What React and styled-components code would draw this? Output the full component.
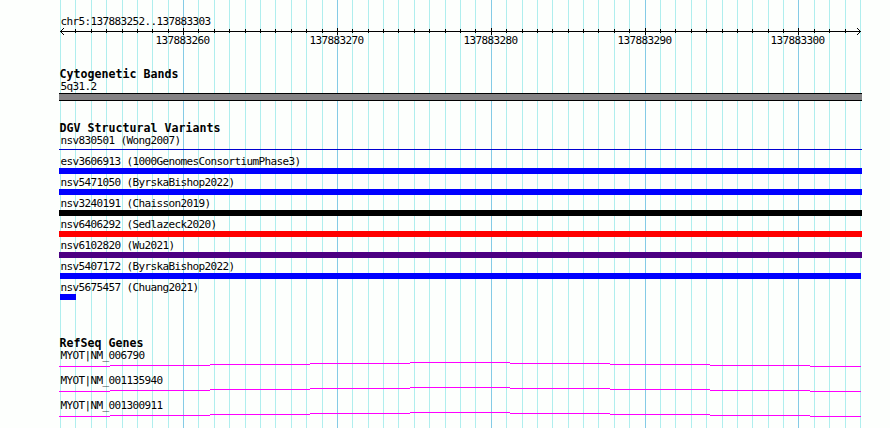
import React from "react";
import styled, { createGlobalStyle } from "styled-components";

const Global = createGlobalStyle`
  html, body { margin: 0; background: #fdfffd; }
`;

const Browser = styled.main`
  position: relative;
  width: 890px;
  height: 428px;
  overflow: hidden;
  background: #fdfffd;
  color: #000;
  font: 11px/13px "DejaVu Sans Mono", "Liberation Mono", monospace;
  letter-spacing: -0.622px;
`;

const Grid = styled.svg`
  position: absolute;
  inset: 0;
  shape-rendering: crispEdges;
`;

const Content = styled.div`
  position: relative;
  display: flex;
  flex-direction: column;
  width: 802px;
  padding: 15px 0 0 60px;
`;

const Label = styled.div`
  height: 13px;
  padding-left: 0.4px;
  white-space: pre;
`;

const Ruler = styled.svg`
  display: block;
  width: 802px;
  height: 20px;
  overflow: visible;
`;

const Section = styled.section`
  display: flex;
  flex-direction: column;
  margin-top: ${(p) => p.$gap}px;
`;

const Title = styled.h2`
  margin: 0 0 0 -0.5px;
  height: 12px;
  font-size: 11.6px;
  line-height: 13px;
  font-weight: 700;
  letter-spacing: 0.017px;
  white-space: pre;
`;

const Band = styled.div`
  box-sizing: border-box;
  width: 803px;
  height: 8px;
  margin: 0 0 0 -1px;
  border: solid #000;
  border-width: 1px 0;
  background: #848284;
`;

const Variant = styled.div`
  height: 21px;
`;

const Bar = styled.div`
  width: ${(p) => p.$width}px;
  height: ${(p) => p.$height}px;
  margin: ${(p) => p.$top}px 0 0 ${(p) => p.$left}px;
  background: ${(p) => p.$color};
`;

const Gene = styled.div`
  height: 25px;
`;

const Intron = styled.svg`
  display: block;
  width: 802px;
  height: 6px;
  margin-left: -1px;
  shape-rendering: crispEdges;
`;

const position = (i) => Math.round(60 + (i * 800) / 52);
const isMajor = (i) => i % 10 === 8;
const bases = Array.from({ length: 53 }, (_, i) => i);

const variants = [
  { name: "nsv830501 (Wong2007)", color: "#0000d0", thin: true },
  { name: "esv3606913 (1000GenomesConsortiumPhase3)", color: "#0000ff" },
  { name: "nsv5471050 (ByrskaBishop2022)", color: "#0000ff" },
  { name: "nsv3240191 (Chaisson2019)", color: "#000000" },
  { name: "nsv6406292 (Sedlazeck2020)", color: "#ff0000" },
  { name: "nsv6102820 (Wu2021)", color: "#4b0082" },
  { name: "nsv5407172 (ByrskaBishop2022)", color: "#0000ff", left: 0, width: 801 },
  { name: "nsv5675457 (Chuang2021)", color: "#0000ff", left: 0, width: 16 },
];

const genes = ["MYOT|NM_006790", "MYOT|NM_001135940", "MYOT|NM_001300911"];

const intronEdges = [0, 51, 151, 251, 351, 451, 551, 651, 751, 802];
const intronSteps = [4, 3, 2, 1, 0, 1, 2, 3, 4];

function Scale() {
  return (
    <Ruler>
      <g shapeRendering="crispEdges">
        <rect x="0" y="3" width="801" height="1" />
        {bases.slice(1, -1).map((i) => (
          <rect
            key={i}
            x={position(i) - 60}
            y={isMajor(i) ? 0 : 1}
            width="1"
            height={isMajor(i) ? 7 : 4}
          />
        ))}
      </g>
      <path d="M4 0 L.5 3.5 L4 7 M797 0 L800.5 3.5 L797 7" fill="none" stroke="#000" />
      {bases.filter(isMajor).map((i) => (
        <text key={i} x={position(i) - 87.6} y="16">
          {137883252 + i}
        </text>
      ))}
    </Ruler>
  );
}

export default function App() {
  return (
    <Browser>
      <Global />
      <Grid width="890" height="428">
        {bases.map((i) => (
          <rect
            key={i}
            x={position(i)}
            y="0"
            width="1"
            height="428"
            fill={isMajor(i) ? "#84cbe6" : "#afeeee"}
          />
        ))}
      </Grid>
      <Content>
        <Label>chr5:137883252..137883303</Label>
        <Scale />
        <Section $gap={20}>
          <Title>Cytogenetic Bands</Title>
          <Label>5q31.2</Label>
          <Band />
        </Section>
        <Section $gap={21}>
          <Title>DGV Structural Variants</Title>
          {variants.map((v) => (
            <Variant key={v.name}>
              <Label>{v.name}</Label>
              <Bar
                $color={v.color}
                $height={v.thin ? 1 : 6}
                $top={v.thin ? 2 : 0}
                $left={v.left ?? -1}
                $width={v.width ?? 803}
              />
            </Variant>
          ))}
        </Section>
        <Section $gap={35}>
          <Title>RefSeq Genes</Title>
          {genes.map((name) => (
            <Gene key={name}>
              <Label>{name}</Label>
              <Intron>
                {intronSteps.map((y, i) => (
                  <rect
                    key={i}
                    x={intronEdges[i]}
                    y={y}
                    width={intronEdges[i + 1] - intronEdges[i]}
                    height="1"
                    fill="#ff00ff"
                  />
                ))}
              </Intron>
            </Gene>
          ))}
        </Section>
      </Content>
    </Browser>
  );
}
